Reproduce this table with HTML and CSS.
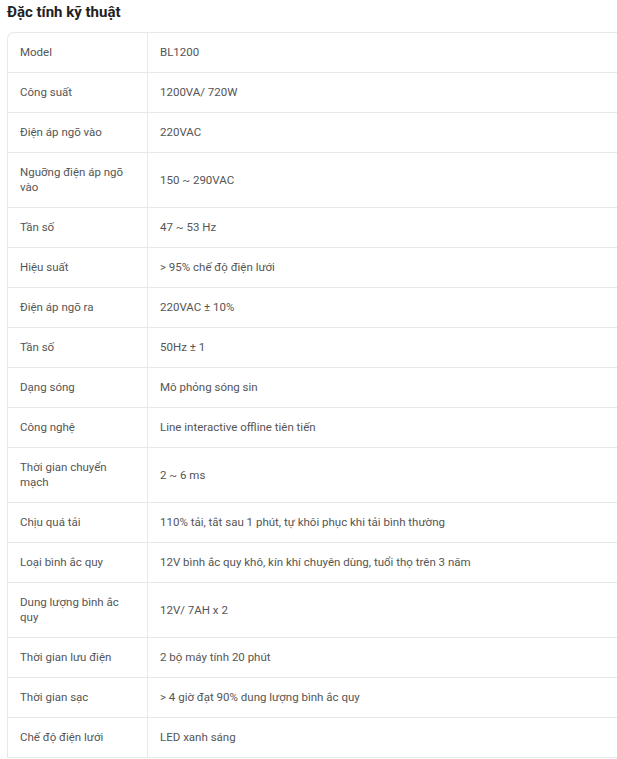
FILE: index.html
```html
<!DOCTYPE html>
<html lang="vi">
<head>
<meta charset="utf-8">
<link rel="stylesheet" href="styles.css">
</head>
<body>
<div class="spec">
  <h3 class="spec-title">Đặc tính kỹ thuật</h3>
  <table class="spec-table">
    <tbody>
      <tr><td class="k">Model</td><td>BL1200</td></tr>
      <tr><td class="k">Công suất</td><td>1200VA/ 720W</td></tr>
      <tr><td class="k">Điện áp ngõ vào</td><td>220VAC</td></tr>
      <tr><td class="k">Nguỡng điện áp ngõ vào</td><td>150 ~ 290VAC</td></tr>
      <tr><td class="k">Tần số</td><td>47 ~ 53 Hz</td></tr>
      <tr><td class="k">Hiệu suất</td><td>&gt; 95% chế độ điện lưới</td></tr>
      <tr><td class="k">Điện áp ngõ ra</td><td>220VAC ± 10%</td></tr>
      <tr><td class="k">Tần số</td><td>50Hz ± 1</td></tr>
      <tr><td class="k">Dạng sóng</td><td>Mô phỏng sóng sin</td></tr>
      <tr><td class="k">Công nghệ</td><td>Line interactive offline tiên tiến</td></tr>
      <tr><td class="k">Thời gian chuyển mạch</td><td>2 ~ 6 ms</td></tr>
      <tr><td class="k">Chịu quá tải</td><td>110% tải, tắt sau 1 phút, tự khôi phục khi tải bình thường</td></tr>
      <tr><td class="k">Loại bình ắc quy</td><td>12V bình ắc quy khô, kín khí chuyên dùng, tuổi thọ trên 3 năm</td></tr>
      <tr><td class="k">Dung lượng bình ắc quy</td><td>12V/ 7AH x 2</td></tr>
      <tr><td class="k">Thời gian lưu điện</td><td>2 bộ máy tính 20 phút</td></tr>
      <tr><td class="k">Thời gian sạc</td><td>&gt; 4 giờ đạt 90% dung lượng bình ắc quy</td></tr>
      <tr><td class="k">Chế độ điện lưới</td><td>LED xanh sáng</td></tr>
    </tbody>
  </table>
</div>
</body>
</html>
```
FILE: styles.css
```css
html, body {
  margin: 0;
  padding: 0;
  background: #fff;
  overflow: hidden;
}
body {
  font-family: Roboto, "Noto Sans", sans-serif;
}
.spec {
  padding: 0 0 0 7px;
}
.spec-title {
  margin: 0;
  padding-top: 2px;
  height: 30px;
  font-size: 15px;
  line-height: 20px;
  font-weight: 700;
  color: #222;
}
.spec-table {
  width: 740px;
  border-collapse: separate;
  border-spacing: 0;
  border-top: 1px solid #e8e8e8;
  border-left: 1px solid #e8e8e8;
  border-top-left-radius: 7px;
  font-size: 11.5px;
  line-height: 15px;
  color: #555;
}
.spec-table td {
  padding: 12px;
  border-bottom: 1px solid #e8e8e8;
  vertical-align: middle;
  text-align: left;
}
.spec-table td.k {
  width: 115px;
  border-right: 1px solid #e8e8e8;
}
```
